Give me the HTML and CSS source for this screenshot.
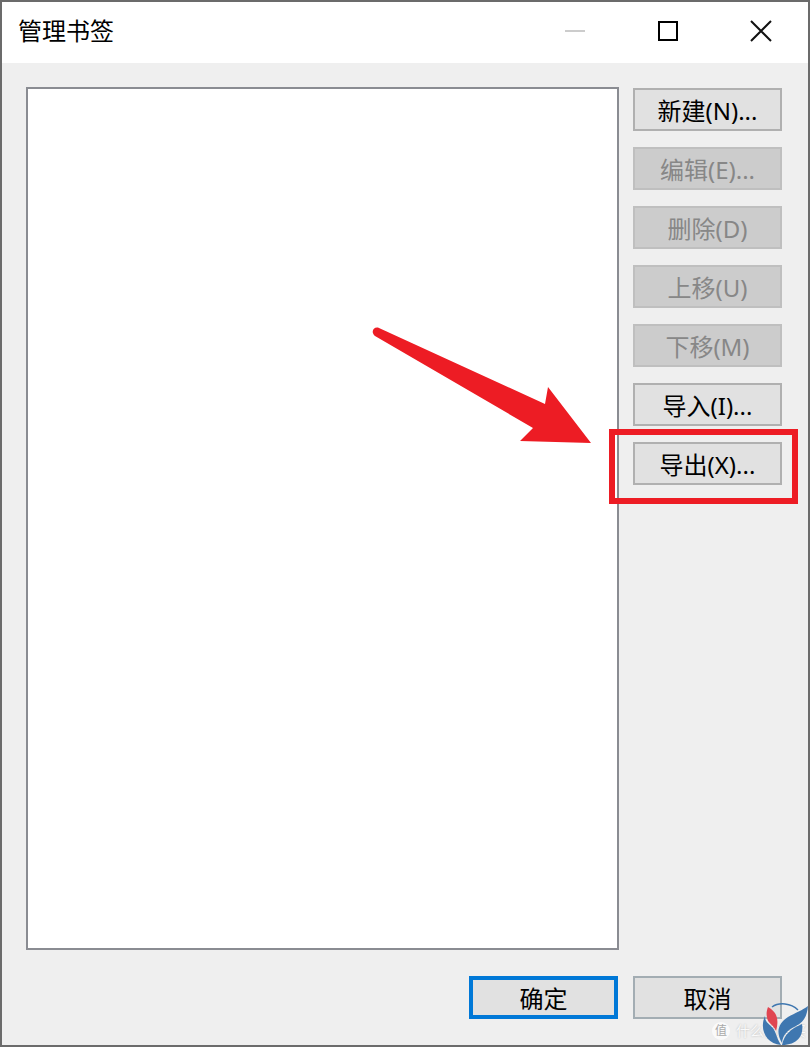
FILE: index.html
```html
<!DOCTYPE html>
<html lang="zh-CN">
<head>
    <meta charset="UTF-8">
    <meta name="viewport" content="width=device-width, initial-scale=1.0">
    <title>管理书签</title>
    <link rel="stylesheet" href="styles.css">
</head>
<body>
    <div class="window">
        <header class="titlebar">
            <h1>管理书签</h1>
            <div class="window-controls">
                <button type="button" aria-label="最小化" disabled>
                    <svg width="22" height="22" viewBox="0 0 22 22"><path d="M1 11H21" stroke="#cccccc" stroke-width="2"/></svg>
                </button>
                <button type="button" aria-label="最大化">
                    <svg width="22" height="22" viewBox="0 0 22 22"><rect x="2" y="2" width="18" height="18" fill="none" stroke="#000" stroke-width="2"/></svg>
                </button>
                <button type="button" aria-label="关闭">
                    <svg width="22" height="22" viewBox="0 0 22 22"><path d="M1 1L21 21M21 1L1 21" stroke="#111" stroke-width="2"/></svg>
                </button>
            </div>
        </header>

        <main class="content">
            <div class="list-wrap">
                <select class="bookmark-list" size="2" aria-label="书签"></select>
                <svg class="arrow" width="220" height="118" viewBox="0 0 220 118">
                    <path d="M8 1L174 77L177 60L220 116L149 114L162 101L4 9C-1 5 3 -1 8 1Z" fill="#ed1c24"/>
                </svg>
            </div>
            <div class="actions">
                <button type="button" class="btn">新建(N)...</button>
                <button type="button" class="btn" disabled>编辑(E)...</button>
                <button type="button" class="btn" disabled>删除(D)</button>
                <button type="button" class="btn" disabled>上移(U)</button>
                <button type="button" class="btn" disabled>下移(M)</button>
                <button type="button" class="btn">导入(I)...</button>
                <div class="marked">
                    <button type="button" class="btn">导出(X)...</button>
                </div>
            </div>
        </main>

        <footer class="footer">
            <button type="button" class="btn btn-default">确定</button>
            <button type="button" class="btn btn-cancel">取消</button>
        </footer>

        <div class="watermark">
            <span class="badge">值</span>
            <span>什么值得买</span>
        </div>
        <svg class="logo" width="48" height="44" viewBox="0 0 48 44">
            <path d="M11 5C18 0 30 1 37 8" fill="none" stroke="#3f77b0" stroke-width="1.5"/>
            <path d="M4 14C-2 27 5 42 20 43C15 35 15 29 11 25C7 21 4 20 4 14Z" fill="#3f77b0"/>
            <path d="M7 5C14 9 19 15 15 29C13 23 6 21 6 15C5 11 6 8 7 5Z" fill="#e04450"/>
            <path d="M47 4C46 14 43 20 35 24C27 28 22 32 21 41C14 29 18 21 27 15C34 11 42 8 47 4Z" fill="#3f77b0"/>
            <path d="M41 22C43 34 36 43 21 43C23 33 29 27 41 22Z" fill="#3f77b0"/>
        </svg>
    </div>
</body>
</html>
```

FILE: styles.css
```css
* {
    box-sizing: border-box;
}
body {
    margin: 0;
    font-family: "Noto Sans", "Noto Sans CJK SC", sans-serif;
    font-size: 24px;
    color: #000;
}
.window {
    position: relative;
    display: flex;
    flex-direction: column;
    min-height: 100vh;
    border: 2px solid #6b6b6b;
    background-color: #efefef;
}
.titlebar {
    display: flex;
    justify-content: space-between;
    align-items: center;
    height: 61px;
    padding: 0 36px 4px 16px;
    background-color: #fff;
}
.titlebar h1 {
    margin: 0;
    font-size: 24px;
    line-height: 32px;
    font-weight: normal;
}
.window-controls {
    display: flex;
    gap: 71px;
}
.window-controls button {
    display: block;
    padding: 0;
    border: none;
    background: none;
}
.window-controls svg {
    display: block;
}
.content {
    flex: 1;
    display: flex;
    gap: 14px;
    padding: 24px 26px 0 24px;
}
.list-wrap {
    position: relative;
    flex: 1;
    display: flex;
}
.bookmark-list {
    flex: 1;
    border: 2px solid #8a8c92;
    border-radius: 0;
    background-color: #fff;
    outline: none;
}
.arrow {
    position: absolute;
    top: 240px;
    right: 28px;
}
.actions {
    display: flex;
    flex-direction: column;
    gap: 16px;
    padding-top: 1px;
}
.btn {
    display: block;
    width: 149px;
    height: 43px;
    padding: 2px 0 0;
    border: 2px solid #b0b0b0;
    border-radius: 0;
    background-color: #e1e1e1;
    color: #000;
    font-family: inherit;
    font-size: 24px;
    line-height: 32px;
}
.btn:disabled {
    border-color: #bfbfbf;
    background-color: #cccccc;
    color: #878787;
}
.btn-default {
    border: 4px solid #0078d7;
}
.btn-cancel {
    border-color: #a3adb3;
}
.marked {
    position: relative;
}
.marked::after {
    content: "";
    position: absolute;
    top: -13px;
    right: -16px;
    bottom: -19px;
    left: -24px;
    border: 6px solid #ed1c24;
    pointer-events: none;
}
.footer {
    display: flex;
    justify-content: flex-end;
    gap: 15px;
    padding: 26px;
}
.watermark {
    position: absolute;
    right: 2px;
    bottom: 4px;
    display: flex;
    align-items: center;
    gap: 6px;
    color: #fafafa;
    font-size: 14px;
    line-height: 20px;
    text-shadow: 0 0 2px #b0b0b0;
}
.badge {
    width: 18px;
    height: 18px;
    border-radius: 50%;
    background-color: #fafafa;
    color: #aaa;
    font-size: 12px;
    line-height: 18px;
    text-align: center;
    text-shadow: none;
}
.logo {
    position: absolute;
    right: -1px;
    bottom: -1px;
}
```
